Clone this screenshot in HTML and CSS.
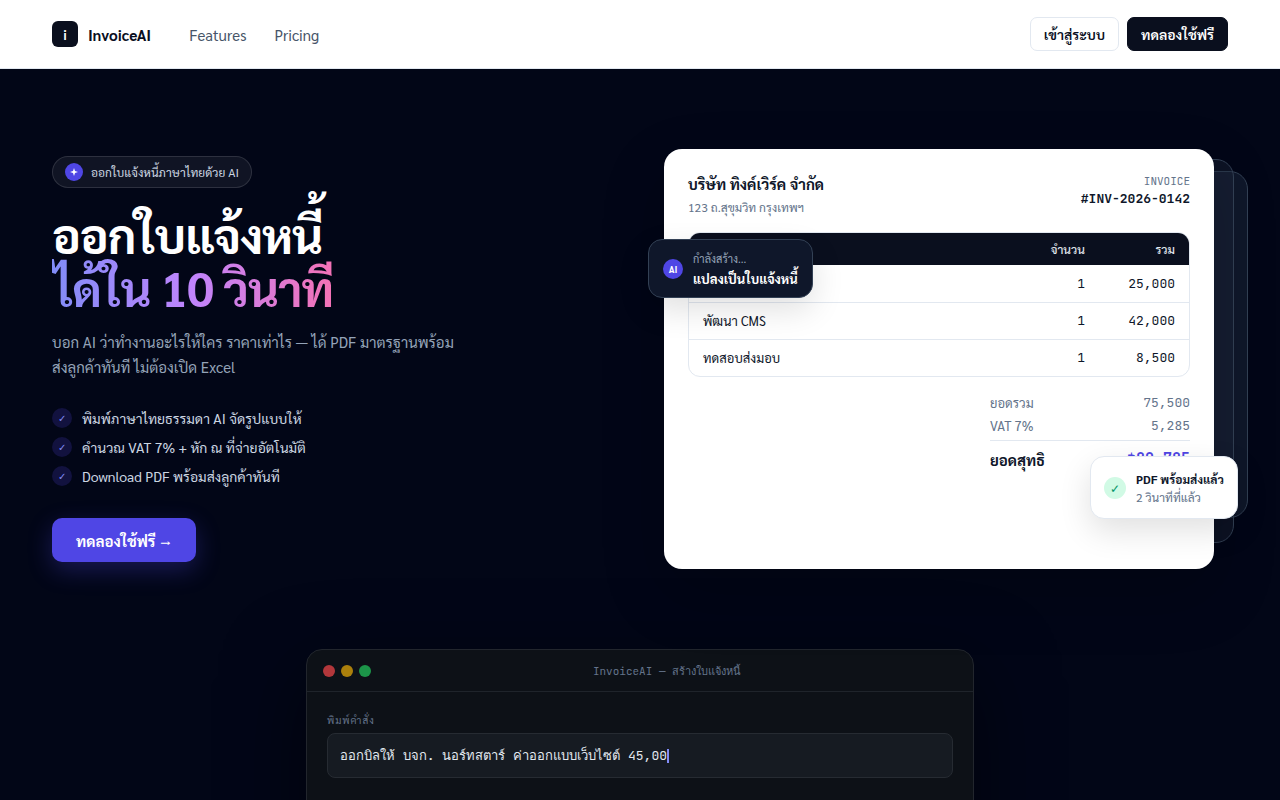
FILE: index.html
```
<!DOCTYPE html>
<html lang="th">
<head>
    <meta charset="UTF-8">
    <meta name="viewport" content="width=device-width, initial-scale=1.0">
    <title>InvoiceAI</title>
    <link rel="stylesheet" href="styles.css">
</head>
<body>
    <header class="navbar">
        <div class="container navbar-inner">
            <a class="brand" href="#"><span class="brand-mark">i</span>InvoiceAI</a>
            <nav class="nav-links">
                <a href="#features">Features</a>
                <a href="#pricing">Pricing</a>
            </nav>
            <div class="nav-actions">
                <button class="btn btn-outline">เข้าสู่ระบบ</button>
                <button class="btn btn-dark">ทดลองใช้ฟรี</button>
            </div>
        </div>
    </header>

    <main class="hero">
        <div class="container hero-grid">
            <section class="hero-copy">
                <div class="pill">
                    <span class="pill-icon">
                        <svg width="8" height="8" viewBox="0 0 8 8"><path d="M4 0 L5 3 L8 4 L5 5 L4 8 L3 5 L0 4 L3 3 Z" fill="#fff"/></svg>
                    </span>
                    ออกใบแจ้งหนี้ภาษาไทยด้วย AI
                </div>
                <h1 class="hero-title">ออกใบแจ้งหนี้<br><span class="gradient-text">ได้ใน 10 วินาที</span></h1>
                <p class="hero-text">บอก AI ว่าทำงานอะไรให้ใคร ราคาเท่าไร — ได้ PDF มาตรฐานพร้อม<br>ส่งลูกค้าทันที ไม่ต้องเปิด Excel</p>
                <ul class="checks">
                    <li><span class="check">✓</span>พิมพ์ภาษาไทยธรรมดา AI จัดรูปแบบให้</li>
                    <li><span class="check">✓</span>คำนวณ VAT 7% + หัก ณ ที่จ่ายอัตโนมัติ</li>
                    <li><span class="check">✓</span>Download PDF พร้อมส่งลูกค้าทันที</li>
                </ul>
                <button class="btn-primary">ทดลองใช้ฟรี →</button>
            </section>

            <section class="stage">
                <div class="sheet sheet-back"></div>
                <div class="sheet sheet-mid"></div>
                <article class="invoice">
                    <div class="invoice-head">
                        <div>
                            <div class="company">บริษัท ทิงค์เวิร์ค จำกัด</div>
                            <div class="address">123 ถ.สุขุมวิท กรุงเทพฯ</div>
                        </div>
                        <div class="invoice-id">
                            <div class="invoice-label">INVOICE</div>
                            <div class="invoice-number">#INV-2026-0142</div>
                        </div>
                    </div>
                    <div class="table-wrap">
                        <table class="items">
                            <thead>
                                <tr><th></th><th class="num">จำนวน</th><th class="num">รวม</th></tr>
                            </thead>
                            <tbody>
                                <tr><td></td><td class="num">1</td><td class="num">25,000</td></tr>
                                <tr><td>พัฒนา CMS</td><td class="num">1</td><td class="num">42,000</td></tr>
                                <tr><td>ทดสอบส่งมอบ</td><td class="num">1</td><td class="num">8,500</td></tr>
                            </tbody>
                        </table>
                    </div>
                    <div class="totals">
                        <div class="total-row"><span>ยอดรวม</span><span class="amount">75,500</span></div>
                        <div class="total-row"><span>VAT 7%</span><span class="amount">5,285</span></div>
                        <div class="total-row grand"><span>ยอดสุทธิ</span><span class="amount">฿80,785</span></div>
                    </div>
                </article>
                <div class="toast toast-ai">
                    <span class="toast-icon">AI</span>
                    <div>
                        <div class="toast-sub">กำลังสร้าง...</div>
                        <div class="toast-title">แปลงเป็นใบแจ้งหนี้</div>
                    </div>
                </div>
                <div class="toast toast-pdf">
                    <span class="toast-icon">✓</span>
                    <div>
                        <div class="toast-title">PDF พร้อมส่งแล้ว</div>
                        <div class="toast-sub">2 วินาทีที่แล้ว</div>
                    </div>
                </div>
            </section>
        </div>

        <section class="terminal">
            <div class="terminal-bar">
                <span class="dot red"></span>
                <span class="dot yellow"></span>
                <span class="dot green"></span>
                <span class="terminal-title">InvoiceAI — สร้างใบแจ้งหนี้</span>
            </div>
            <div class="terminal-body">
                <label class="prompt-label" for="prompt">พิมพ์คำสั่ง</label>
                <div class="prompt-box">
                    <input class="prompt-input" id="prompt" type="text" value="ออกบิลให้ บจก. นอร์ทสตาร์ ค่าออกแบบเว็บไซต์ 45,00">
                    <span class="cursor"></span>
                </div>
            </div>
        </section>
    </main>
</body>
</html>
```
FILE: styles.css
```
* {
    box-sizing: border-box;
}

body {
    margin: 0;
    background-color: #020617;
    color: #0f172a;
    font-family: "Sarabun", "Noto Sans Thai", sans-serif;
    font-size: 14px;
}

a {
    color: inherit;
    text-decoration: none;
}

button,
input {
    font-family: inherit;
}

.container {
    max-width: 1240px;
    margin: 0 auto;
    padding: 0 32px;
}

/* navbar */
.navbar {
    background-color: #fff;
    border-bottom: 1px solid #e2e8f0;
}

.navbar-inner {
    display: flex;
    align-items: center;
    height: 68px;
}

.brand {
    display: flex;
    align-items: center;
    gap: 10px;
    font-size: 15px;
    font-weight: 700;
    color: #0a0f1e;
}

.brand-mark {
    display: flex;
    align-items: center;
    justify-content: center;
    width: 26px;
    height: 26px;
    border-radius: 6px;
    background-color: #0a0f1e;
    color: #fff;
    font-size: 13px;
}

.nav-links {
    display: flex;
    gap: 28px;
    margin-left: 38px;
    color: #475569;
    font-size: 15px;
}

.nav-actions {
    display: flex;
    gap: 8px;
    margin-left: auto;
}

.btn {
    height: 34px;
    padding: 0 13px;
    border: 1px solid #0a0f1e;
    border-radius: 7px;
    font-size: 14px;
    font-weight: 600;
    cursor: pointer;
}

.btn-outline {
    background-color: #fff;
    border-color: #e2e8f0;
    color: #0a0f1e;
}

.btn-dark {
    background-color: #0a0f1e;
    color: #fff;
}

/* hero */
.hero {
    padding: 80px 0;
}

.hero-grid {
    display: grid;
    grid-template-columns: 1fr 1fr;
    gap: 48px;
    align-items: center;
}

.pill {
    display: inline-flex;
    align-items: center;
    gap: 8px;
    height: 32px;
    padding: 0 12px;
    border: 1px solid rgba(255, 255, 255, 0.12);
    border-radius: 16px;
    background-color: rgba(255, 255, 255, 0.06);
    color: #cbd5e1;
    font-size: 12px;
}

.pill-icon {
    display: flex;
    align-items: center;
    justify-content: center;
    width: 18px;
    height: 18px;
    border-radius: 50%;
    background-color: #4f46e5;
}

.hero-title {
    margin: 20px 0 15px;
    color: #fff;
    font-size: 48px;
    font-weight: 700;
    letter-spacing: -1px;
    line-height: 53px;
}

.gradient-text {
    background: linear-gradient(90deg, #818cf8, #c084fc 50%, #f472b6);
    -webkit-background-clip: text;
    background-clip: text;
    color: transparent;
}

.hero-text {
    margin: 0 0 29px;
    color: #94a3b8;
    font-size: 15px;
    line-height: 25px;
}

.checks {
    display: flex;
    flex-direction: column;
    gap: 9px;
    margin: 0 0 32px;
    padding: 0;
    list-style: none;
    color: #cbd5e1;
    line-height: 20px;
}

.checks li {
    display: flex;
    align-items: center;
    gap: 10px;
}

.check {
    width: 20px;
    height: 20px;
    border-radius: 50%;
    background-color: #12123f;
    color: #818cf8;
    font-size: 10px;
    text-align: center;
}

.btn-primary {
    height: 44px;
    padding: 0 24px;
    border: none;
    border-radius: 10px;
    background-color: #4f46e5;
    color: #fff;
    font-size: 15px;
    font-weight: 700;
    box-shadow: 0 8px 24px rgba(79, 70, 229, 0.3);
    cursor: pointer;
}

/* invoice preview */
.stage {
    position: relative;
    padding-right: 14px;
}

.sheet {
    position: absolute;
    left: 40px;
    border: 1px solid #334155;
    border-radius: 18px;
}

.sheet-back {
    top: 22px;
    right: -20px;
    bottom: 51px;
    background-color: #0f172a;
}

.sheet-mid {
    top: 10px;
    right: -6px;
    bottom: 26px;
    background-color: rgba(30, 41, 59, 0.4);
}

.invoice {
    position: relative;
    min-height: 420px;
    padding: 24px;
    border-radius: 18px;
    background-color: #fff;
    box-shadow: 0 24px 64px rgba(0, 0, 0, 0.2);
}

.invoice-head {
    display: flex;
    justify-content: space-between;
    height: 59px;
}

.company {
    font-size: 15px;
    font-weight: 700;
    line-height: 22px;
}

.address {
    color: #64748b;
    font-size: 12px;
    line-height: 24px;
}

.invoice-id,
.amount,
.items td.num {
    font-family: "JetBrains Mono", "DejaVu Sans Mono", monospace;
}

.invoice-id {
    text-align: right;
}

.invoice-label {
    color: #64748b;
    font-size: 11px;
    line-height: 16px;
}

.invoice-number {
    font-size: 13px;
    font-weight: 700;
    line-height: 20px;
}

.table-wrap {
    border: 1px solid #e2e8f0;
    border-radius: 12px;
    overflow: hidden;
}

.items {
    width: 100%;
    border-collapse: collapse;
}

.items th {
    height: 32px;
    padding: 0 14px;
    background-color: #0a0f1e;
    color: #e2e8f0;
    font-size: 12px;
    font-weight: 500;
    text-align: left;
}

.items td {
    height: 37px;
    padding: 0 14px;
    font-size: 13px;
}

.items tr + tr td {
    border-top: 1px solid #e2e8f0;
}

.items .num {
    width: 90px;
    text-align: right;
}

.totals {
    width: 200px;
    margin: 14px 0 0 auto;
    color: #64748b;
    font-size: 13px;
}

.total-row {
    display: flex;
    justify-content: space-between;
    line-height: 23px;
}

.grand {
    margin-top: 3px;
    padding-top: 7px;
    border-top: 1px solid #e2e8f0;
    color: #0f172a;
    font-size: 15px;
    font-weight: 700;
}

.grand .amount {
    color: #4f46e5;
}

/* floating toasts */
.toast {
    position: absolute;
    display: flex;
    align-items: center;
    gap: 10px;
    border-radius: 14px;
    font-size: 12px;
    box-shadow: 0 12px 32px rgba(0, 0, 0, 0.12);
}

.toast-icon {
    display: flex;
    align-items: center;
    justify-content: center;
    width: 20px;
    height: 20px;
    border-radius: 50%;
}

.toast-title {
    font-weight: 700;
}

.toast-ai {
    top: 90px;
    left: -16px;
    height: 59px;
    padding: 0 14px;
    border: 1px solid #334155;
    background-color: #0f172a;
    color: #fff;
    font-size: 13px;
    line-height: 20px;
}

.toast-ai .toast-icon {
    background-color: #4f46e5;
    font-size: 9px;
    font-weight: 700;
}

.toast-ai .toast-sub {
    color: #94a3b8;
    font-size: 11px;
}

.toast-pdf {
    right: -10px;
    bottom: 50px;
    height: 63px;
    padding: 0 13px;
    border: 1px solid #e2e8f0;
    background-color: #fff;
    line-height: 18px;
}

.toast-pdf .toast-icon {
    width: 22px;
    height: 22px;
    background-color: #d1fae5;
    color: #059669;
}

.toast-pdf .toast-sub {
    color: #64748b;
}

/* terminal */
.terminal {
    width: 668px;
    max-width: 90%;
    margin: 80px auto 0;
    border: 1px solid #22262d;
    border-radius: 16px;
    background-color: #0d1117;
    box-shadow: 0 24px 80px rgba(0, 0, 0, 0.5);
}

.terminal-bar {
    display: flex;
    align-items: center;
    gap: 6px;
    height: 42px;
    padding: 0 16px;
    border-bottom: 1px solid #1f242b;
}

.dot {
    width: 12px;
    height: 12px;
    border-radius: 50%;
}

.red {
    background-color: #b2373b;
}

.yellow {
    background-color: #ab800c;
}

.green {
    background-color: #1c9549;
}

.terminal-title {
    flex: 1;
    color: #64748b;
    font-family: "JetBrains Mono", "DejaVu Sans Mono", monospace;
    font-size: 11px;
    text-align: center;
}

.terminal-body {
    padding: 20px 20px 120px;
}

.prompt-label {
    display: block;
    margin-bottom: 6px;
    color: #64748b;
    font-size: 10px;
    letter-spacing: 1px;
    line-height: 15px;
}

.prompt-box {
    display: flex;
    align-items: center;
    height: 45px;
    padding: 0 12px;
    border: 1px solid #262b32;
    border-radius: 8px;
    background-color: #161b22;
}

.prompt-input {
    field-sizing: content;
    padding: 0;
    border: none;
    outline: none;
    background: none;
    color: #e2e8f0;
    font-family: "JetBrains Mono", "DejaVu Sans Mono", monospace;
    font-size: 13px;
}

.cursor {
    width: 2px;
    height: 14px;
    background-color: #818cf8;
}
```
